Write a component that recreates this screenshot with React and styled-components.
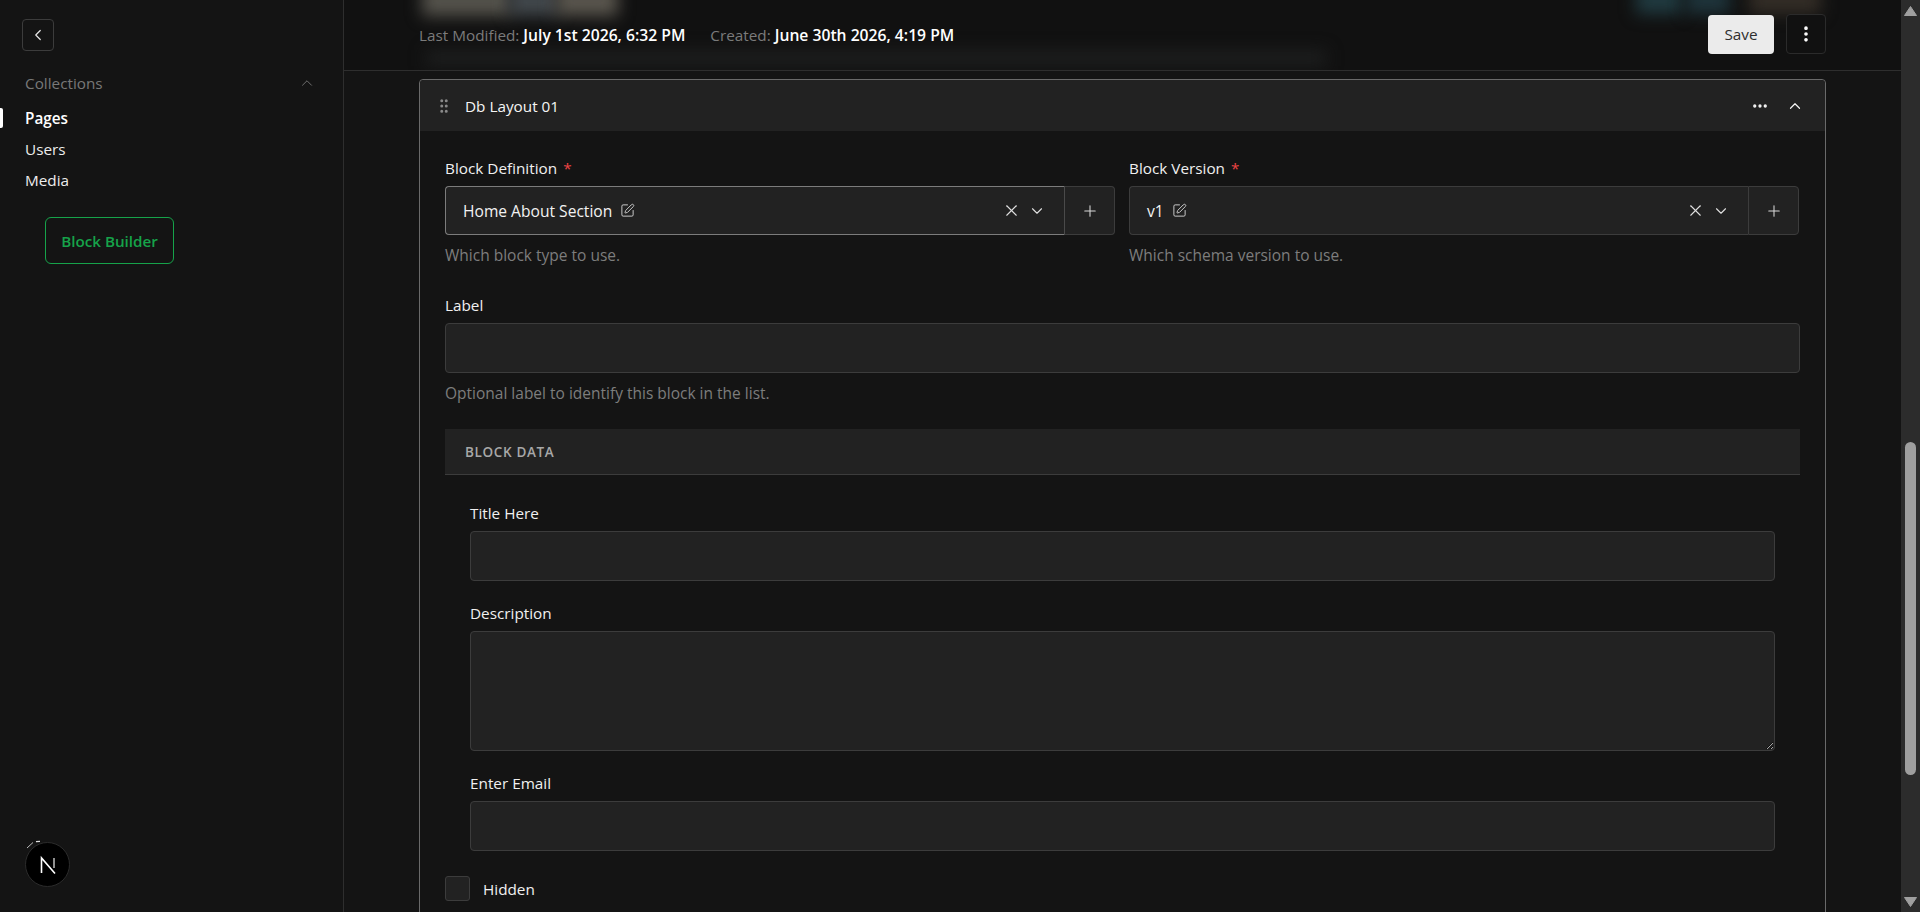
import styled, { createGlobalStyle } from 'styled-components';
import {
  ChevronDown,
  ChevronLeft,
  ChevronUp,
  Ellipsis,
  EllipsisVertical,
  GripVertical,
  Plus,
  SquarePen,
  X,
} from 'lucide-react';

const GlobalStyle = createGlobalStyle`
  html, body {
    margin: 0;
    height: 100%;
    background: #141414;
    color-scheme: dark;
    overflow: hidden;
  }
  * {
    box-sizing: border-box;
  }
  body {
    font-family: 'Open Sans', 'Noto Sans', 'Liberation Sans', sans-serif;
    font-size: 15.3px;
    color: #f2f2f2;
  }
`;

const Shell = styled.div`
  display: flex;
  height: 912px;
  overflow: hidden;
`;

const Sidebar = styled.aside`
  position: relative;
  flex: 0 0 344px;
  padding: 19px 0 0;
  border-right: 1px solid #2e2e2e;
`;

const BackButton = styled.button`
  display: flex;
  align-items: center;
  justify-content: center;
  width: 32px;
  height: 32px;
  margin: 0 0 0 22px;
  padding: 0;
  background: transparent;
  color: #e6e6e6;
  border: 1px solid #3c3c3c;
  border-radius: 4px;
`;

const GroupHead = styled.div`
  display: flex;
  align-items: center;
  justify-content: space-between;
  height: 20px;
  margin: 22px 27px 0 25px;
  color: #787878;
`;

const NavList = styled.nav`
  display: flex;
  flex-direction: column;
  margin-top: 15px;
`;

const NavItem = styled.a`
  position: relative;
  height: 31px;
  padding-left: 25px;
  line-height: 21px;
  font-weight: ${(p) => (p.$active ? 600 : 500)};
  color: ${(p) => (p.$active ? '#ffffff' : '#ededed')};

  &::before {
    content: ${(p) => (p.$active ? "''" : 'none')};
    position: absolute;
    left: 0;
    top: 0;
    width: 3px;
    height: 20px;
    background: #ffffff;
    border-radius: 0 2px 2px 0;
  }
`;

const BuilderButton = styled.button`
  display: block;
  width: 129px;
  height: 47px;
  margin: 16px 0 0 45px;
  padding: 0;
  background: transparent;
  border: 1px solid #16a34a;
  border-radius: 6px;
  color: #16a34a;
  font: 600 15.2px 'Open Sans', sans-serif;
`;

const NextBadge = styled.div`
  position: absolute;
  left: 25px;
  bottom: 25px;
  width: 45px;
  height: 45px;
  display: flex;
  align-items: center;
  justify-content: center;
  background: #000000;
  border: 1px solid #2b2b2b;
  border-radius: 50%;
`;

const BadgeArc = styled.svg`
  position: absolute;
  left: -2px;
  top: -4px;
`;

const Main = styled.main`
  flex: 1;
  min-width: 0;
  display: flex;
  flex-direction: column;
`;

const Header = styled.header`
  position: relative;
  flex: 0 0 71px;
  display: flex;
  align-items: center;
  justify-content: space-between;
  padding: 0 75px 2px 75px;
  background: #111111;
  border-bottom: 1px solid #2e2e2e;
  overflow: hidden;
`;

const Blur = styled.span`
  position: absolute;
  left: ${(p) => p.$left}px;
  top: ${(p) => p.$top}px;
  width: ${(p) => p.$width}px;
  height: ${(p) => p.$height}px;
  background: ${(p) => p.$fill};
  filter: blur(8px);
`;

const Meta = styled.div`
  position: relative;
  display: flex;
  gap: 25px;
  margin-top: 2px;
  color: #7b7b7b;
`;

const MetaValue = styled.b`
  font-size: 15.7px;
  font-weight: 600;
  color: #ffffff;
`;

const Actions = styled.div`
  position: relative;
  display: flex;
  align-items: center;
  gap: 12px;
`;

const SaveButton = styled.button`
  width: 66px;
  height: 39px;
  padding: 0;
  background: #ebebeb;
  color: #2e2e2e;
  border: 0;
  border-radius: 4px;
  font: 400 15.3px 'Open Sans', sans-serif;
`;

const MoreButton = styled.button`
  display: flex;
  align-items: center;
  justify-content: center;
  width: 40px;
  height: 40px;
  padding: 0;
  background: #111111;
  color: #ffffff;
  border: 1px solid #2b2b2b;
  border-radius: 4px;
`;

const Content = styled.div`
  flex: 1;
  min-height: 0;
  padding: 8px 75px 0 75px;
  overflow: hidden;
`;

const Card = styled.section`
  border: 1px solid #6a6a6a;
  border-radius: 4px 4px 0 0;
`;

const CardHead = styled.div`
  display: flex;
  align-items: center;
  height: 51px;
  padding: 0 21px 0 15px;
  background: #222222;
  border-radius: 4px 4px 0 0;
  color: #f5f5f5;
`;

const DragHandle = styled.span`
  display: flex;
  margin-right: 12px;
  color: #8a8a8a;
`;

const CardTitle = styled.span`
  flex: 1;
`;

const HeadIcons = styled.div`
  display: flex;
  align-items: center;
  gap: 17px;
  color: #f5f5f5;
`;

const CardBody = styled.div`
  padding: 27px 25px 60px;
`;

const TwoCols = styled.div`
  display: grid;
  grid-template-columns: 670px 670px;
  gap: 14px;
`;

const Field = styled.div`
  display: flex;
  flex-direction: column;
  margin-top: ${(p) => p.$top || 0}px;
`;

const Label = styled.label`
  height: 20px;
  margin-bottom: 8px;
  line-height: 20px;
  color: #f0f0f0;
`;

const Required = styled.span`
  margin-left: 6px;
  color: #ef4444;
`;

const Help = styled.div`
  height: 20px;
  margin-top: 10px;
  line-height: 20px;
  font-size: 15.5px;
  color: #7d7d7d;
`;

const SelectRow = styled.div`
  display: flex;
  height: 49px;
`;

const SelectBox = styled.div`
  flex: 1;
  display: flex;
  align-items: center;
  gap: 8px;
  padding: 0 18px 0 17px;
  background: #222222;
  border: 1px solid ${(p) => (p.$active ? '#7c7c7c' : '#3c3c3c')};
  border-right: ${(p) => (p.$active ? '1px solid #4a4a4a' : '0')};
  border-radius: 4px 0 0 4px;
`;

const SelectText = styled.span`
  font-size: 15.6px;
  color: #f2f2f2;
`;

const EditIcon = styled.span`
  display: flex;
  color: #c8c8c8;
`;

const SelectIcons = styled.div`
  margin-left: auto;
  display: flex;
  align-items: center;
  gap: 7px;
  color: #e0e0e0;
`;

const AddButton = styled.button`
  flex: 0 0 ${(p) => (p.$active ? 50 : 51)}px;
  display: flex;
  align-items: center;
  justify-content: center;
  padding: 0;
  background: #222222;
  color: #d8d8d8;
  border: 1px solid #3c3c3c;
  border-left: ${(p) => (p.$active ? '0' : '1px solid #3c3c3c')};
  border-radius: 0 4px 4px 0;
`;

const TextInput = styled.input`
  display: block;
  width: 100%;
  height: 50px;
  padding: 0 15px;
  background: #222222;
  color: #f2f2f2;
  border: 1px solid #3c3c3c;
  border-radius: 4px;
  outline: 0;
`;

const TextArea = styled.textarea`
  display: block;
  width: 100%;
  height: 120px;
  padding: 12px 15px;
  background: #222222;
  color: #f2f2f2;
  border: 1px solid #3c3c3c;
  border-radius: 4px;
  outline: 0;
`;

const SectionBar = styled.div`
  display: flex;
  align-items: center;
  height: 46px;
  margin-top: 26px;
  padding: 0 20px;
  background: #222222;
  border-bottom: 1px solid #3c3c3c;
  font-size: 13.5px;
  font-weight: 600;
  letter-spacing: 0.65px;
  color: #a8a8a8;
`;

const Nested = styled.div`
  padding: 28px 25px 0;
`;

const CheckRow = styled.label`
  display: flex;
  align-items: center;
  gap: 13px;
  height: 25px;
  margin-top: 25px;
  color: #f0f0f0;
`;

const CheckBox = styled.input`
  appearance: none;
  width: 25px;
  height: 25px;
  margin: 0;
  background: #222222;
  border: 1px solid #3c3c3c;
  border-radius: 3px;
`;

const Scrollbar = styled.div`
  flex: 0 0 19px;
  display: flex;
  flex-direction: column;
  align-items: center;
  background: #2c2c2c;
`;

const ScrollArrow = styled.svg`
  flex: none;
  margin-top: ${(p) => p.$top}px;
  color: #a0a0a0;
`;

const ScrollThumb = styled.div`
  flex: none;
  width: 11px;
  height: 333px;
  margin-top: 426px;
  background: #9f9f9f;
  border-radius: 6px;
`;

const blurs = [
  { left: 78, top: -14, width: 90, height: 30, fill: '#55534c' },
  { left: 165, top: -14, width: 50, height: 30, fill: '#42484c' },
  { left: 212, top: -14, width: 62, height: 30, fill: '#5a564e' },
  { left: 82, top: 50, width: 900, height: 16, fill: '#1d1e1e' },
  { left: 1292, top: -14, width: 46, height: 28, fill: '#203a40' },
  { left: 1342, top: -14, width: 44, height: 28, fill: '#1e343b' },
  { left: 1405, top: -14, width: 72, height: 28, fill: '#332d26' },
];

const SelectField = ({ label, value, help, active }) => (
  <Field>
    <Label>
      {label}
      <Required>*</Required>
    </Label>
    <SelectRow>
      <SelectBox $active={active}>
        <SelectText>{value}</SelectText>
        <EditIcon>
          <SquarePen size={15} strokeWidth={1.6} />
        </EditIcon>
        <SelectIcons>
          <X size={19} strokeWidth={1.4} />
          <ChevronDown size={18} strokeWidth={1.5} />
        </SelectIcons>
      </SelectBox>
      <AddButton $active={active}>
        <Plus size={18} strokeWidth={1.4} />
      </AddButton>
    </SelectRow>
    <Help>{help}</Help>
  </Field>
);

export default function App() {
  return (
    <>
      <GlobalStyle />
      <Shell>
        <Sidebar>
          <BackButton>
            <ChevronLeft size={18} strokeWidth={1.6} />
          </BackButton>
          <GroupHead>
            Collections
            <ChevronUp size={18} strokeWidth={1.2} />
          </GroupHead>
          <NavList>
            <NavItem $active>Pages</NavItem>
            <NavItem>Users</NavItem>
            <NavItem>Media</NavItem>
          </NavList>
          <BuilderButton>Block Builder</BuilderButton>
          <NextBadge>
            <BadgeArc width="20" height="12" viewBox="0 0 20 12" fill="none">
              <path d="M3 9 L9 3.5" stroke="#bdbdbd" strokeWidth="1" />
              <path d="M12 2.6 L16 2.4" stroke="#e0e0e0" strokeWidth="1.4" />
            </BadgeArc>
            <svg width="20" height="20" viewBox="0 0 20 20" fill="none">
              <path d="M3.5 18V3L17 18.5" stroke="#ffffff" strokeWidth="1.6" />
              <path d="M16 3V13" stroke="#ffffff" strokeOpacity="0.7" strokeWidth="1.6" />
            </svg>
          </NextBadge>
        </Sidebar>
        <Main>
          <Header>
            {blurs.map((b) => (
              <Blur
                key={b.left}
                $left={b.left}
                $top={b.top}
                $width={b.width}
                $height={b.height}
                $fill={b.fill}
              />
            ))}
            <Meta>
              <span>
                Last Modified: <MetaValue>July 1st 2026, 6:32 PM</MetaValue>
              </span>
              <span>
                Created: <MetaValue>June 30th 2026, 4:19 PM</MetaValue>
              </span>
            </Meta>
            <Actions>
              <SaveButton>Save</SaveButton>
              <MoreButton>
                <EllipsisVertical size={20} strokeWidth={2.4} />
              </MoreButton>
            </Actions>
          </Header>
          <Content>
            <Card>
              <CardHead>
                <DragHandle>
                  <GripVertical size={18} strokeWidth={2} />
                </DragHandle>
                <CardTitle>Db Layout 01</CardTitle>
                <HeadIcons>
                  <Ellipsis size={18} strokeWidth={2.4} />
                  <ChevronUp size={18} strokeWidth={1.6} />
                </HeadIcons>
              </CardHead>
              <CardBody>
                <TwoCols>
                  <SelectField
                    active
                    label="Block Definition"
                    value="Home About Section"
                    help="Which block type to use."
                  />
                  <SelectField
                    label="Block Version"
                    value="v1"
                    help="Which schema version to use."
                  />
                </TwoCols>
                <Field $top={30}>
                  <Label>Label</Label>
                  <TextInput />
                  <Help>Optional label to identify this block in the list.</Help>
                </Field>
                <SectionBar>BLOCK DATA</SectionBar>
                <Nested>
                  <Field>
                    <Label>Title Here</Label>
                    <TextInput />
                  </Field>
                  <Field $top={22}>
                    <Label>Description</Label>
                    <TextArea />
                  </Field>
                  <Field $top={22}>
                    <Label>Enter Email</Label>
                    <TextInput />
                  </Field>
                </Nested>
                <CheckRow>
                  <CheckBox type="checkbox" />
                  Hidden
                </CheckRow>
              </CardBody>
            </Card>
          </Content>
        </Main>
        <Scrollbar>
          <ScrollArrow $top={6} width="13" height="10" viewBox="0 0 13 10">
            <path d="M6.5 0.5 L12.5 9.5 H0.5 Z" fill="currentColor" stroke="currentColor" strokeLinejoin="round" />
          </ScrollArrow>
          <ScrollThumb />
          <ScrollArrow $top={122} width="13" height="10" viewBox="0 0 13 10">
            <path d="M6.5 9.5 L12.5 0.5 H0.5 Z" fill="currentColor" stroke="currentColor" strokeLinejoin="round" />
          </ScrollArrow>
        </Scrollbar>
      </Shell>
    </>
  );
}
